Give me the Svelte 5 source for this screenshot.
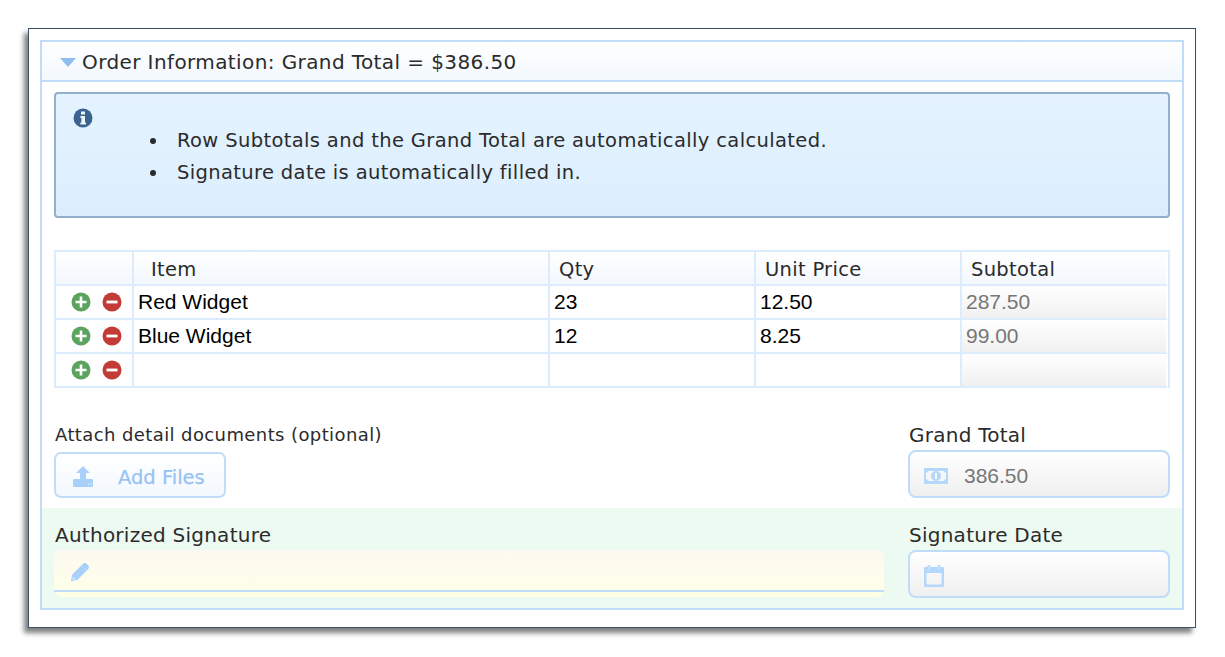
<script>
  const rows = [
    { item: "Red Widget", qty: "23", price: "12.50", subtotal: "287.50" },
    { item: "Blue Widget", qty: "12", price: "8.25", subtotal: "99.00" },
    { item: "", qty: "", price: "", subtotal: "" }
  ];
</script>

<div class="page">
  <div class="frame">
    <section class="panel">
      <header class="panel-head">
        <span class="caret"></span>
        <span>Order Information: Grand Total = $386.50</span>
      </header>

      <div class="body">
        <div class="info">
          <svg class="info-icon" viewBox="0 0 20 20" width="20" height="20">
            <circle cx="10" cy="10" r="9.500" fill="#3a6390" />
            <path d="M8 3.600h4v2.900H8zM7.400 8h4.600v6.600h1v1.900H7.400v-1.900h1v-4.700h-1z" fill="#eef5fb" />
          </svg>
          <ul>
            <li>Row Subtotals and the Grand Total are automatically calculated.</li>
            <li>Signature date is automatically filled in.</li>
          </ul>
        </div>

        <table>
          <thead>
            <tr>
              <th class="actions"></th>
              <th class="first">Item</th>
              <th>Qty</th>
              <th>Unit Price</th>
              <th>Subtotal</th>
            </tr>
          </thead>
          <tbody>
            {#each rows as row}
              <tr>
                <td class="actions">
                  <div class="btns">
                    <svg viewBox="0 0 20 20" width="20" height="20">
                      <circle cx="10" cy="10" r="9.500" fill="#5ba35f" />
                      <path d="M8.700 4.500h2.600v4.200h4.200v2.600h-4.200v4.200H8.700v-4.200H4.500V8.700h4.200z" fill="#fff" />
                    </svg>
                    <svg viewBox="0 0 20 20" width="20" height="20">
                      <circle cx="10" cy="10" r="9.500" fill="#c23b36" />
                      <path d="M4.500 8.600h11v2.800h-11z" fill="#fff" />
                    </svg>
                  </div>
                </td>
                <td>{row.item}</td>
                <td>{row.qty}</td>
                <td>{row.price}</td>
                <td class="calc">{row.subtotal}</td>
              </tr>
            {/each}
          </tbody>
        </table>

        <div class="row attach">
          <div class="grow">
            <div class="label small">Attach detail documents (optional)</div>
            <div class="add">
              <svg viewBox="0 0 22 22" width="22" height="22">
                <path d="M10 0l7 7h-4v6h6a1 1 0 0 1 1 1v6a1 1 0 0 1-1 1H1a1 1 0 0 1-1-1v-6a1 1 0 0 1 1-1h6V7H3z" fill="#a8d0fb" />
                <circle cx="15.500" cy="18" r="0.800" fill="#e2effd" />
                <circle cx="18" cy="18" r="0.800" fill="#e2effd" />
              </svg>
              <span>Add Files</span>
            </div>
          </div>
          <div class="side">
            <div class="label">Grand Total</div>
            <div class="field">
              <svg viewBox="0 0 24 16" width="24" height="16">
                <path fill-rule="evenodd" d="M0 0h24v16H0zM4 3a3 3 0 0 1-2 2v6a3 3 0 0 1 2 2h16a3 3 0 0 1 2-2V5a3 3 0 0 1-2-2zM12 3a5 5 0 1 0 .01 0zM11 5h2v6h-2z" fill="#b4d8fc" />
              </svg>
              <span>386.50</span>
            </div>
          </div>
        </div>

        <div class="row sign">
          <div class="grow">
            <div class="label">Authorized Signature</div>
            <div class="sig-input">
              <svg viewBox="0 0 20 20" width="20" height="20">
                <path d="M0.800 19.200l1.500-6.700L12.800 2q2-2 4 0l1.200 1.200q2 2 0 4L7.500 17.700z" fill="#a8d0fb" />
                <path d="M11.500 3.800l4.700 4.700" stroke="#c4defc" stroke-width="0.800" fill="none" />
                <circle cx="3.600" cy="16.400" r="1" fill="#eef6fe" />
              </svg>
            </div>
          </div>
          <div class="side">
            <div class="label">Signature Date</div>
            <div class="field">
              <svg viewBox="0 0 20 22" width="20" height="22">
                <path fill-rule="evenodd" d="M1 2h2.500V1a1 1 0 0 1 1-1h1a1 1 0 0 1 1 1v1h7V1a1 1 0 0 1 1-1h1a1 1 0 0 1 1 1v1H19a1 1 0 0 1 1 1v18a1 1 0 0 1-1 1H1a1 1 0 0 1-1-1V3a1 1 0 0 1 1-1zM2.500 8v11.500h15V8zM4.700 1.200v3.300h.6V1.200zM14.700 1.200v3.300h.6V1.200z" fill="#b4d8fc" />
              </svg>
            </div>
          </div>
        </div>
      </div>
    </section>
  </div>
</div>

<style>
  :global(body) {
    background: #fff;
    color: #2b2b2b;
    font-family: "DejaVu Sans", sans-serif;
  }

  .page {
    box-sizing: border-box;
    height: 657px;
    padding: 28px 0 0 28px;
  }

  .frame {
    box-sizing: border-box;
    width: 1168px;
    height: 600px;
    padding: 11px 11px 0 11px;
    background: #fff;
    border: 1px solid #3e5068;
    box-shadow: -4px 5px 5px rgba(0, 0, 0, 0.5);
  }

  .panel {
    box-sizing: border-box;
    width: 1144px;
    height: 570px;
    border: 2px solid #c0dcf8;
  }

  .panel-head {
    box-sizing: border-box;
    display: flex;
    align-items: center;
    gap: 6px;
    height: 40px;
    padding: 2px 0 0 18px;
    font-size: 20px;
    letter-spacing: 0.4px;
    border-bottom: 2px solid #c0dcf8;
    background: linear-gradient(#fff, #f3f8fe);
  }

  .caret {
    width: 0;
    height: 0;
    border-left: 8px solid transparent;
    border-right: 8px solid transparent;
    border-top: 9px solid #90bdf0;
  }

  .body {
    padding: 10px 0 0 0;
  }

  .info {
    box-sizing: border-box;
    display: flex;
    height: 126px;
    margin: 0 12px;
    padding: 14px 0 0 17px;
    background: linear-gradient(#e4f3fe, #dceefe);
    border: 2px solid #92b0cc;
    border-radius: 4px;
    font-size: 19.5px;
    letter-spacing: 0.36px;
  }

  .info-icon {
    flex: none;
  }

  ul {
    margin: 17px 0 0 0;
    padding: 0 0 0 57px;
    list-style: none;
  }

  li {
    display: flex;
    align-items: center;
    gap: 21px;
    height: 32px;
    line-height: 32px;
  }

  li::before {
    content: "";
    width: 6px;
    height: 6px;
    border-radius: 50%;
    background: #2b2b2b;
  }

  table {
    box-sizing: border-box;
    width: 1116px;
    margin: 32px 12px 0;
    border-collapse: separate;
    border-spacing: 0;
    table-layout: fixed;
    border-top: 2px solid #dcecfc;
    border-left: 2px solid #dcecfc;
    border-right: 2px solid #dcecfc;
  }

  th, td {
    box-sizing: border-box;
    padding: 0;
    border-right: 2px solid #dcecfc;
    border-bottom: 2px solid #dcecfc;
    text-align: left;
  }

  th {
    height: 34px;
    padding: 2px 0 0 9px;
    font-size: 19.5px;
    letter-spacing: 0.3px;
    font-weight: normal;
    background: linear-gradient(#fff, #f3f8fe);
  }

  th.first {
    padding-left: 17px;
  }

  th:last-child, td:last-child {
    border-right: 2px solid #fff;
  }

  td {
    height: 34px;
    padding-left: 4px;
    font-family: "Liberation Sans", sans-serif;
    font-size: 21px;
    color: #000;
  }

  .actions {
    width: 78px;
    padding: 0;
  }

  th:nth-child(2) {
    width: 416px;
  }

  th:nth-child(3), th:nth-child(4) {
    width: 206px;
  }

  .btns {
    display: flex;
    gap: 11px;
    padding-left: 15px;
  }

  .btns svg {
    display: block;
  }

  td.calc {
    color: #777;
    background: linear-gradient(#fff, #f0f0f0);
  }

  .row {
    display: flex;
    justify-content: space-between;
    padding: 0 12px;
  }

  .grow {
    display: flex;
    flex-direction: column;
    align-items: flex-start;
  }

  .label {
    height: 28px;
    padding-left: 1px;
    line-height: 26px;
    font-size: 20px;
    letter-spacing: 0.25px;
  }

  .label.small {
    height: 26px;
    font-size: 18px;
    letter-spacing: 0.4px;
  }

  .attach {
    box-sizing: border-box;
    height: 120px;
    padding-top: 34px;
  }

  .add {
    box-sizing: border-box;
    display: flex;
    align-items: center;
    gap: 23px;
    width: 172px;
    height: 46px;
    margin-top: 4px;
    padding: 4px 0 0 17px;
    font-size: 19.5px;
    color: #97c3f3;
    -webkit-text-stroke: 0.25px #97c3f3;
    background: linear-gradient(#fff, #f3f8fe);
    border: 2px solid #c0dcf8;
    border-radius: 7px;
  }

  .side {
    width: 262px;
  }

  .field {
    box-sizing: border-box;
    display: flex;
    align-items: center;
    gap: 16px;
    height: 48px;
    padding: 4px 0 0 14px;
    font-family: "Liberation Sans", sans-serif;
    font-size: 21px;
    color: #777;
    background: linear-gradient(#fff, #efefef);
    border: 2px solid #c0dcf8;
    border-radius: 8px;
  }

  .sign {
    box-sizing: border-box;
    height: 100px;
    padding-top: 14px;
    background: #edfaf2;
  }

  .sign .grow {
    width: 830px;
    align-items: stretch;
  }

  .sig-input {
    box-sizing: border-box;
    height: 47px;
    padding: 12px 0 0 16px;
    background: linear-gradient(#fdf9f2, #ffffe6);
    border-radius: 8px;
    position: relative;
  }

  .sig-input::after {
    content: "";
    position: absolute;
    left: 0;
    right: 0;
    top: 40px;
    height: 2px;
    background: #c0dcf8;
  }
</style>
